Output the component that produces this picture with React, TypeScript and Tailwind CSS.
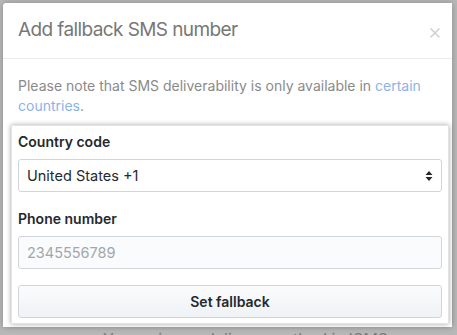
export default function App() {
  return (
    <div
      className="h-[335px] w-[457px] overflow-hidden bg-[#b8b8b8] pl-[3px] pt-[3px]"
      style={{ fontFamily: 'Inter, "Noto Sans", sans-serif' }}
    >
      <div className="w-[449px] rounded-tl-[3px] bg-white shadow-[0_0_6px_rgba(0,0,0,0.25)]">
        {/* header */}
        <div className="flex h-[56px] items-center justify-between border-b border-[#ececec] pl-[15px] pr-[10px]">
          <h1 className="text-[19px] font-normal tracking-[-0.6px] text-[#777777]">Add fallback SMS number</h1>
          <span className="text-[22px] leading-none font-light text-[#d0d0d0]">×</span>
        </div>

        {/* body */}
        <div className="pb-[3px] pt-[17px]">
          <p className="px-[15px] text-[14px] leading-[20px] text-[#8a8a8a]">
            Please note that SMS deliverability is only available in{' '}
            <span className="text-[#8ab3ea]">certain countries</span>.
          </p>

          {/* highlighted form */}
          <div className="ml-[8px] mr-[3px] mt-[9px] border border-[#e4e4e4] bg-white px-[6px] pb-[5px] pt-[6px] shadow-[0_0_5px_rgba(0,0,0,0.35)]">
            <label className="block text-[14px] font-semibold leading-[20px] text-[#24292e]">Country code</label>
            <div className="mt-[7px] flex h-[33px] items-center justify-between rounded-[3px] border border-[#d1d5da] bg-white pl-[8px] pr-[8px]">
              <span className="text-[14.5px] text-[#24292e]">United States +1</span>
              <svg width="8" height="12" viewBox="0 0 8 12" className="text-[#24292e]">
                <path d="M4 1 L7.5 5 H0.5 Z M4 11 L7.5 7 H0.5 Z" fill="currentColor" />
              </svg>
            </div>

            <label className="mt-[17px] block text-[14px] font-semibold leading-[20px] text-[#24292e]">Phone number</label>
            <div className="mt-[7px] flex h-[33px] items-center rounded-[3px] border border-[#d1d5da] bg-[#fafbfc] pl-[8px]">
              <span className="text-[14.5px] text-[#a3a7ab]">2345556789</span>
            </div>

            <button className="mt-[16px] flex h-[33px] w-full items-center justify-center rounded-[3px] border border-[#d1d5da] bg-gradient-to-b from-[#fafbfc] to-[#eff3f6] text-[14px] font-semibold text-[#24292e]">
              Set fallback
            </button>
          </div>
        </div>
      </div>

      <div className="mt-[2px] whitespace-nowrap pl-[100px] text-[16px] leading-[20px] text-[#7a7a7a]">
        Your primary delivery method is 'SMS message'
      </div>
    </div>
  )
}
